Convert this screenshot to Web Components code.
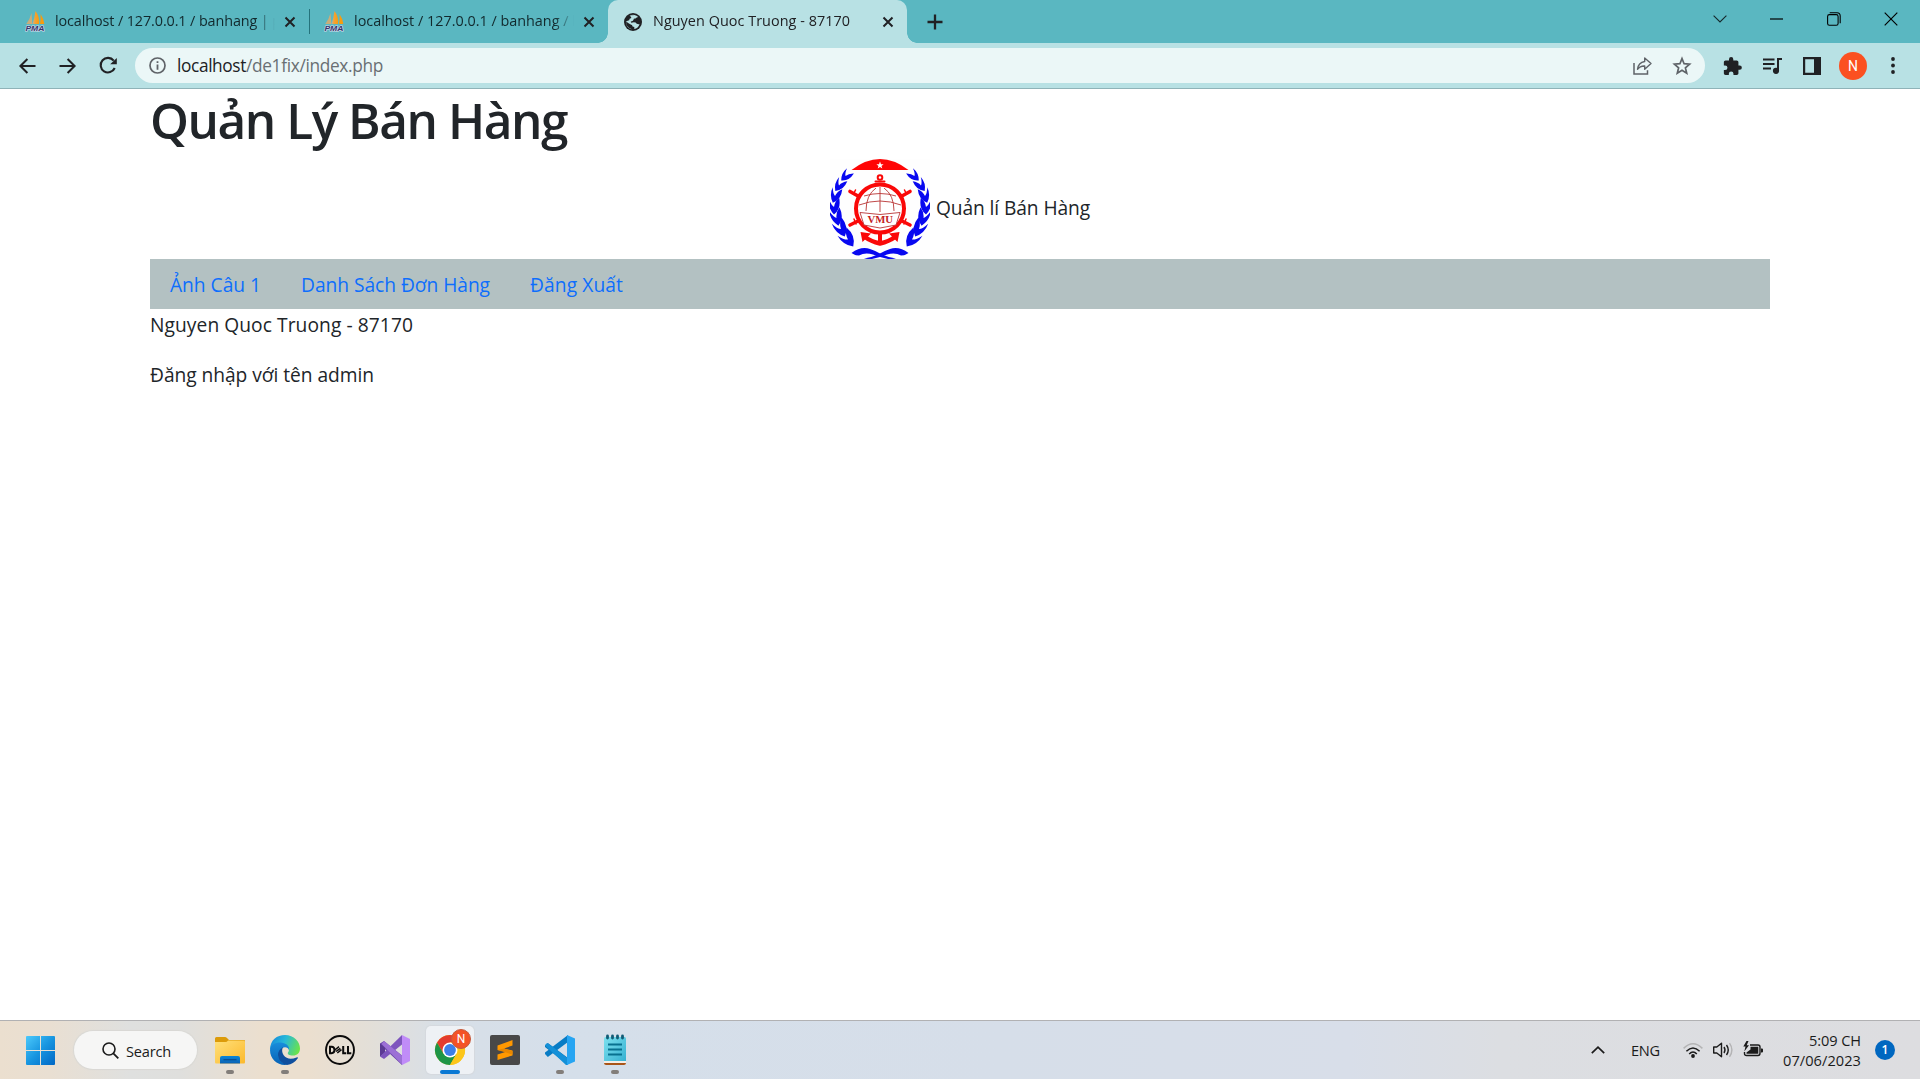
<!DOCTYPE html>
<html lang="vi">
<head>
<meta charset="utf-8">
<title>Nguyen Quoc Truong - 87170</title>
<style>
html,body{margin:0;height:100%;overflow:hidden}
body{font-family:"Open Sans","Noto Sans",sans-serif;background:#fff;color:#212529}
</style>
</head>
<body>
<desk-screen></desk-screen>
<script>
const ICONS = {
  pma: ['0 0 20 21', `<defs><linearGradient id="s" x1="0" x2="1"><stop offset="0" stop-color="#b9b49c"/><stop offset=".4" stop-color="#f5a233"/><stop offset="1" stop-color="#f89c0e"/></linearGradient></defs><path d="M6.500 2 7.300 13H1.300Q5 8 6.500 2Z" fill="#c9ad7a"/><path d="M10.500 0Q15 6 14 13H7.500Q9.600 7 10.500 0Z" fill="url(#s)"/><path d="M15.500 3Q19 8 19.300 13H15Q16 8 15.500 3Z" fill="#f89c0e"/><text x="0.400" y="19.700" font-family="Liberation Sans" font-size="7.300" font-weight="700" font-style="italic" fill="#34356b" stroke="#d6dcec" stroke-width="1.100" paint-order="stroke" textLength="19" lengthAdjust="spacingAndGlyphs">PMA</text>`],
  x: ['0 0 12 12', `<path d="M1.500 1.500 10.500 10.500M10.500 1.500 1.500 10.500" stroke="#202124" stroke-width="2" fill="none"/>`],
  globe: ['0 0 18 18', `<circle cx="9" cy="9" r="9" fill="#202124"/><path d="M10.300 1.900Q13 2.300 14.200 4 12.500 4.300 11.500 5.500 9.500 5.200 9.500 6.800 9 8.500 7.500 8.200 6 8.600 7.300 9.700 9.800 9 11.600 9.600 12.300 11.300 14.700 11.300 L15.600 11.300Q14.200 15.300 10.300 16V14Q8 13.800 8 12 6.500 11.500 2.200 8.400 1.800 10.500 3 12.800 5.300 16 8 16.200 3.500 15.600 2 11 1 5.500 5.500 2.700 8 1.500 10.300 1.900Z" fill="#b8e1e4"/><path d="M10.300 1.900Q8 1.500 5.500 2.700 7.500 3.500 7.300 5 5 5.500 5.200 7.200 3.500 7.400 2.200 8.400L1.700 7Q2 3.500 5.500 2.200Z" fill="#202124"/>`],
  plus: ['0 0 16 16', `<path d="M8 .5V15.500M.5 8H15.500" stroke="#202124" stroke-width="2.300"/>`],
  tabs: ['0 0 14 8', `<path d="M.6.6 7 7 13.400.6" fill="none" stroke="#15282b" stroke-width="1.100"/>`],
  min: ['0 0 13 2', `<path d="M0 1H13" stroke="#000" stroke-width="1.200"/>`],
  restore: ['0 0 14 14', `<rect x=".6" y="2.600" width="10.500" height="10.700" rx="1.800" fill="none" stroke="#000" stroke-width="1.100"/><path d="M2.700.7H10Q13.200.7 13.200 4V11.200" fill="none" stroke="#000" stroke-width="1.100"/>`],
  close: ['0 0 14 14', `<path d="M.7.7 13.300 13.300M13.300.7.7 13.300" stroke="#000" stroke-width="1.150"/>`],
  back: ['0 0 17 16', `<path d="M16.500 8H1.800M8.400 1 1.400 8 8.400 15" fill="none" stroke="#202124" stroke-width="2"/>`],
  forward: ['0 0 17 16', `<path d="M.5 8H15.200M8.600 1 15.600 8 8.600 15" fill="none" stroke="#202124" stroke-width="2"/>`],
  reload: ['0 0 18 17', `<path d="M14.700 3.600A7.300 7.300 0 1 0 15.700 11" fill="none" stroke="#202124" stroke-width="2.100"/><path d="M17.800 1V7.300H11.200Z" fill="#202124"/>`],
  info: ['0 0 17 17', `<circle cx="8.500" cy="8.500" r="7.500" fill="none" stroke="#5f6368" stroke-width="1.700"/><path d="M8.500 7.500V12.700M8.500 4.200V6" stroke="#5f6368" stroke-width="1.800"/>`],
  share: ['0 0 19 18', `<path d="M1 6V17H14.500V13.300" fill="none" stroke="#5f6368" stroke-width="1.500"/><path d="M11.700 1 18 6.600 11.700 12.200V9Q7.200 8.700 4.500 12.300 5.300 5.500 11.700 4.500Z" fill="none" stroke="#5f6368" stroke-width="1.400" stroke-linejoin="round"/>`],
  star: ['0 0 18 18', `<path d="M9 1.600 11.100 6.700 16.600 7.200 12.400 10.800 13.700 16.200 9 13.300 4.300 16.200 5.600 10.800 1.400 7.200 6.900 6.700Z" fill="none" stroke="#5f6368" stroke-width="1.700"/>`],
  puzzle: ['1 1 21 21', `<path fill="#202124" d="M20.500 11H19V7c0-1.100-.9-2-2-2h-4V3.500a2.500 2.500 0 0 0-5 0V5H4c-1.100 0-2 .9-2 2v3.800h1.500a2.700 2.700 0 0 1 0 5.400H2V20c0 1.100.9 2 2 2h3.800v-1.500a2.700 2.700 0 0 1 5.400 0V22H17c1.100 0 2-.9 2-2v-4h1.500a2.500 2.500 0 0 0 0-5z"/>`],
  music: ['0 0 19 16', `<path d="M0 1.500H11.500M0 6H11.500M0 10.500H8" stroke="#202124" stroke-width="1.900"/><path d="M15 12.500V1H19" fill="none" stroke="#202124" stroke-width="2"/><circle cx="13" cy="12.800" r="3.100" fill="#202124"/>`],
  panel: ['0 0 18 18', `<path d="M1.100 1.100H16.900V16.900H1.100Z" fill="none" stroke="#202124" stroke-width="2.200"/><rect x="11" y="1" width="6.500" height="16" fill="#202124"/>`],
  dots: ['0 0 4 17', `<g fill="#202124"><circle cx="2" cy="2" r="1.900"/><circle cx="2" cy="8.500" r="1.900"/><circle cx="2" cy="15" r="1.900"/></g>`],
  windows: ['0 0 29 29', `<defs><linearGradient id="w" gradientUnits="userSpaceOnUse" x1="0" y1="0" x2="29" y2="29"><stop offset="0" stop-color="#4cc9fb"/><stop offset=".5" stop-color="#1795e0"/><stop offset="1" stop-color="#0067c5"/></linearGradient></defs><path fill="url(#w)" d="M1 0H14V14H0V1Q0 0 1 0ZM15 0H28Q29 0 29 1V14H15ZM0 15H14V29H1Q0 29 0 28ZM15 15H29V28Q29 29 28 29H15Z"/>`],
  search: ['0 0 17 17', `<circle cx="7" cy="7" r="6" fill="none" stroke="#1b1b1b" stroke-width="1.600"/><path d="M11.300 11.300 16.300 16.300" stroke="#1b1b1b" stroke-width="1.800"/>`],
  folder: ['0 0 30 30', `<defs><linearGradient id="f" x2="1" y2="1"><stop stop-color="#ffe07a"/><stop offset="1" stop-color="#fcb92c"/></linearGradient><linearGradient id="b" x2="0" y2="1"><stop stop-color="#0a86d8"/><stop offset="1" stop-color="#0b62b4"/></linearGradient></defs><path d="M0 8V3.500Q0 2 1.500 2H10Q11 2 12 3L14 5H29Q30 5 30 6V9H0Z" fill="#dc9b0a"/><path d="M0 7H10.500Q12 7 13 5.500H29Q30 5.500 30 7V27Q30 28.500 29 28.500H1Q0 28.500 0 27Z" fill="url(#f)"/><path d="M5 28.500V23Q5 21 7 21H23Q25 21 25 23V28.500Z" fill="url(#b)"/><path d="M8.500 24.700H21.500" stroke="#0a4f93" stroke-width="1.300"/>`],
  edge: ['0 0 30 30', `<defs><linearGradient id="t" x1="0" y1=".3" x2="1" y2=".6"><stop stop-color="#168bdc"/><stop offset=".45" stop-color="#28b9d8"/><stop offset="1" stop-color="#6be34a"/></linearGradient><linearGradient id="l" x2="0" y2="1"><stop stop-color="#198ddb"/><stop offset="1" stop-color="#0762b6"/></linearGradient></defs><path d="M0 15C0 5 7 0 15 0 24 0 30 6.500 30 13.500 30 18 27 20.500 23 20.500 19 20.500 16.500 19 18.500 16.700 20 14 17.500 10 12 10 6 10 0 14 0 15Z" fill="url(#t)"/><path d="M0 15C.6 9.700 5 7.500 10 7.500 16 7.500 19.800 11.300 19 15 18 11.500 12 11 10 16 8 21 10 27 17 29.800 8 31 0 24.500 0 15Z" fill="url(#l)"/><path d="M13 12Q8 15 8 20 9 28 17 29.900 24 29 28 23 28 22 26.500 22.500 18 26 13.500 20 11 16 13 12Z" fill="#0f4f9e"/>`],
  dell: ['0 0 30 30', `<circle cx="15" cy="15" r="14" fill="none" stroke="#0b0b0b" stroke-width="1.900"/><g fill="none" stroke="#0b0b0b" stroke-width="2"><path d="M5 11.800V18.200H6.500Q9.500 18 9.500 15T6.500 11.800Z"/><path d="M9.800 15 14 11.700M11 16.500 15.300 13.300M12.300 18 16.500 14.700" stroke-width="1.500"/><path d="M18.200 11V18.200H21.300M23 11V18.200H26.300"/></g>`],
  vs: ['0 0 30 30', `<path d="M0 8.500 4 6 22 20.500V30L2 11.500V20L0 21.500Z" fill="#6b46a8"/><path d="M0 21.500V8.500L5 12.500V18Z" fill="#5b3a94"/><path d="M4 24 0 21.500 22 0V9.500Z" fill="#7d55bd"/><path d="M4 6 22.500 21V30L1.500 9Z" fill="#9c70d6"/><path d="M22 0 30 4V26L22 30Z" fill="#c08cf8"/>`],
  chrome: ['0 0 30 30', `<circle cx="15" cy="15" r="15" fill="#fbc116"/><path d="M2 7.500A15 15 0 0 1 28 7.500H15L8.500 18.800Z" fill="#e33b2e"/><path d="M2 7.500A15 15 0 0 0 15 30L21.500 18.800H8.500Z" fill="#1e9547"/><path d="M15 7.500H28A15 15 0 0 1 15 30L21.500 18.800Z" fill="#fcc61a"/><circle cx="15" cy="15" r="7.500" fill="#fff"/><circle cx="15" cy="15" r="5.900" fill="#3d7fe8"/>`],
  sublime: ['0 0 30 30', `<rect width="30" height="30" rx="2" fill="#484848"/><path d="M7.500 10.500 22.500 5V10.500L14 13.500 22.500 15.500V20.500L7.500 25V19.500L16 16.800 7.500 15Z" fill="#ff9800"/><path d="M7.500 15 22.500 19.500V16L14 13.500Z" fill="#e88700"/>`],
  vscode: ['0 0 30 30', `<path d="M0 10.500 2.800 8 23 23V30L0 12Z" fill="#0877b9"/><path d="M0 19 2.800 22 23 7V0L0 17.500Z" fill="#087cc5"/><path d="M0 10.500Q1.500 7 4 9L23 23.500V30H21Z" fill="#1490d8"/><path d="M22 0 30 3.500V26.500L22 30Z" fill="#27a5f2"/>`],
  notepad: ['0 0 22 30', `<defs><linearGradient id="n" x2="1" y2="1"><stop stop-color="#7de1ef"/><stop offset="1" stop-color="#34afd0"/></linearGradient></defs><rect y="2" width="22" height="26" rx="1.500" fill="url(#n)"/><path d="M0 26H22V28Q22 30 20 30H2Q0 30 0 28Z" fill="#f2eee8"/><path d="M0 28H22Q22 30 20 30H2Q0 30 0 28Z" fill="#a85518"/><path d="M4 9.500H18M4 14.500H18M4 19.500H18" stroke="#08718f" stroke-width="1.900"/><path d="M3.500 1V3M8.500 1V3M13.500 1V3M18.500 1V3" stroke="#115b75" stroke-width="2.800" stroke-linecap="round"/>`],
  up: ['0 0 14 8', `<path d="M.8 7.200 7 1.200 13.200 7.200" fill="none" stroke="#1b1b1b" stroke-width="1.700"/>`],
  wifi: ['0 0 20 15', `<g fill="none" stroke="#1b1b1b" stroke-width="1.500"><path d="M.6 5.400Q10-4 19.400 5.400" stroke="#b4b4b5"/><path d="M3.400 8.300Q10 1.600 16.600 8.300"/><path d="M6.200 11Q10 7 13.800 11"/></g><circle cx="10" cy="13" r="1.900" fill="#1b1b1b"/>`],
  volume: ['0 0 20 16', `<g fill="none" stroke="#1b1b1b" stroke-width="1.400"><path d="M.7 5H3.800L8.500 1.300V14.700L3.800 11H.7Z" stroke-linejoin="round"/><path d="M11 5Q13 8 11 11M13.500 3Q17 8 13.500 13"/><path d="M16.500 1.200Q21.300 8 16.500 14.800" stroke="#b4b4b5"/></g>`],
  battery: ['0 0 20 16', `<path d="M7 4H15Q17 4 17 6V12Q17 14.500 15 14.500H3.500Q1.500 14.500 1.500 12.500V11" fill="none" stroke="#1b1b1b" stroke-width="1.400"/><path d="M7.500 5.800H15.300V12.800H3.500V11.500L7.500 8.500ZM18 7.500H19Q20 7.500 20 8.500V10.500Q20 11.500 19 11.500H18Z" fill="#1b1b1b"/><path d="M3.500 0 .3 5.600H2.500L1.300 10.500 6 4.300H3.700L5.500 0Z" fill="#1b1b1b"/>`]
};

const shadow = (el, html) => { el.attachShadow({mode:'open'}).innerHTML = html; return el.shadowRoot; };

class UiIcon extends HTMLElement {
  connectedCallback() {
    const [box, body] = ICONS[this.getAttribute('name')];
    const [, , bw, bh] = box.split(' ');
    const w = this.getAttribute('w') || bw, h = this.getAttribute('h') || bh;
    shadow(this, `<style>:host{display:inline-flex;flex:none}svg{display:block;overflow:visible}</style><svg width="${w}" height="${h}" viewBox="${box}">${body}</svg>`);
  }
}
customElements.define('ui-icon', UiIcon);

/* Text run whose letter spacing is adjusted so that it takes up a set width. */
class FitText extends HTMLElement {
  connectedCallback() {
    const root = shadow(this, `<style>:host{display:inline-block;white-space:pre;flex:none}span{display:inline-block}</style><span><slot></slot></span>`);
    const w = +this.getAttribute('w'), s = root.querySelector('span');
    const n = [...this.textContent].length;
    s.style.letterSpacing = (w - s.getBoundingClientRect().width) / n + 'px';
    this.style.width = w + 'px';
  }
}
customElements.define('fit-text', FitText);

class BrowserTab extends HTMLElement {
  constructor() {
    super();
    shadow(this, `<style>
      :host{display:flex;align-items:center;width:299px;height:43px;box-sizing:border-box;padding-left:15px;color:#12292d;font-size:14.400px;position:relative;flex:none}
      .title{width:220px;margin-left:10px;margin-top:-2px;overflow:hidden;white-space:nowrap;line-height:24px;flex:none;-webkit-mask-image:linear-gradient(90deg,#000 200px,transparent 220px)}
      ui-icon{margin-top:-1px}
      .x{margin-left:9px;margin-top:0}
      :host([active]){background:#b8e1e4;border-radius:10px 10px 0 0;color:#202124}
      :host([active])::before,:host([active])::after{content:"";position:absolute;bottom:0;width:10px;height:10px}
      :host([active])::before{left:-10px;background:radial-gradient(circle at 0 0,transparent 9.500px,#b8e1e4 10px)}
      :host([active])::after{right:-10px;background:radial-gradient(circle at 100% 0,transparent 9.500px,#b8e1e4 10px)}
    </style><slot name="icon"></slot><div class="title"><slot></slot></div><ui-icon class="x" name="x"></ui-icon>`);
  }
}
customElements.define('browser-tab', BrowserTab);

class TabStrip extends HTMLElement {
  constructor() {
    super();
    shadow(this, `<style>
      :host{display:flex;height:43px;background:#5ab7c1;padding-left:10px;align-items:center}
      .sep{width:1px;height:25px;background:#25737c;flex:none}
      .new{margin-left:20px}
      .win{margin-left:auto;display:flex;height:37px;align-self:flex-start;align-items:center}
      .win span{width:57px;display:flex;justify-content:center}
      .win span:last-child{width:58px}
    </style>
    <browser-tab><ui-icon slot="icon" name="pma"></ui-icon><fit-text w="226">localhost / 127.0.0.1 / banhang | p</fit-text></browser-tab>
    <div class="sep"></div>
    <browser-tab style="width:298px;padding-left:14px"><ui-icon slot="icon" name="pma"></ui-icon><fit-text w="227">localhost / 127.0.0.1 / banhang / h</fit-text></browser-tab>
    <browser-tab active><ui-icon slot="icon" name="globe" style="margin:0 1px 0 1px"></ui-icon><fit-text w="197">Nguyen Quoc Truong - 87170</fit-text></browser-tab>
    <ui-icon class="new" name="plus"></ui-icon>
    <div class="win"><span><ui-icon name="tabs"></ui-icon></span><span><ui-icon name="min"></ui-icon></span><span><ui-icon name="restore"></ui-icon></span><span><ui-icon name="close"></ui-icon></span></div>`);
  }
}
customElements.define('tab-strip', TabStrip);

class AddressBar extends HTMLElement {
  constructor() {
    super();
    shadow(this, `<style>
      :host{display:flex;height:45px;background:#b8e1e4;align-items:center;box-sizing:border-box;padding:0 26px 0 19px}
      .bar{display:flex;align-items:center;height:35px;width:1570px;border-radius:18px;background:#ebf7f7;margin-left:18px;box-sizing:border-box;padding:0 14px;flex:none;font-size:17.300px}
      .url{display:flex;margin-left:11px;color:#202124}
      .path{color:#696f73}
      .share{margin-left:auto;margin-right:21px}
      .avatar{width:28px;height:28px;border-radius:50%;background:#fb5020;color:#fff;font:14px/28px Roboto,sans-serif;text-align:center;margin:0 24px 0 18px;flex:none}
    </style>
    <ui-icon name="back"></ui-icon><ui-icon name="forward" style="margin-left:23px"></ui-icon><ui-icon name="reload" style="margin-left:23px"></ui-icon>
    <div class="bar"><ui-icon name="info"></ui-icon><div class="url"><fit-text w="69">localhost</fit-text><fit-text class="path" w="137">/de1fix/index.php</fit-text></div><ui-icon class="share" name="share"></ui-icon><ui-icon name="star"></ui-icon></div>
    <ui-icon name="puzzle" w="18" h="18" style="margin-left:18px"></ui-icon><ui-icon name="music" style="margin-left:22px"></ui-icon><ui-icon name="panel" style="margin-left:21px"></ui-icon>
    <div class="avatar">N</div><ui-icon name="dots"></ui-icon>`);
  }
}
customElements.define('address-bar', AddressBar);

class SchoolEmblem extends HTMLElement {
  constructor() {
    super();
    const spots = [[15.500,17,44],[9,26.500,34],[5,37,18],[4,48,0],[6.500,59,-14],[11,70,-27],[18,80.500,-37]];
    const leaves = spots.map(([x,y,r],i)=>`<path transform="translate(${x} ${y}) rotate(${r}) scale(${.95+i*.065})" d="M0 6.500Q-5.500 1-4.500-7-2.500-1.500 0 0 .5-4.500 4.500-8 6.500 1.500 0 6.500Z"/>`).join('');
    shadow(this, `<style>:host{display:inline-block;width:100px;height:100px;flex:none}svg{display:block}</style>
    <svg width="100" height="100" viewBox="0 0 100 100">
      <rect width="100" height="100" fill="#fefefe"/>
      <path d="M21.500 11Q50-11 78.500 11Z" fill="#ff0505"/>
      <path d="M50 2.500 51 5.200H53.600L51.500 6.900 52.300 9.500 50 8 47.700 9.500 48.500 6.900 46.400 5.200H49Z" fill="#fff"/>
      <g fill="#0808f0">${leaves}<g transform="matrix(-1 0 0 1 100 0)">${leaves}</g></g>
      <g fill="#0808f0"><path id="r" d="M21.500 94Q31 87 40 90 46 92 50 94.500 58 98.500 66 99.500L62 100H58Q49 98 43 95.500 35 93 29 96.500 25 96.500 21.500 94Z"/><path transform="matrix(-1 0 0 1 100 0)" d="M21.500 94Q31 87 40 90 46 92 50 94.500 58 98.500 66 99.500L62 100H58Q49 98 43 95.500 35 93 29 96.500 25 96.500 21.500 94Z"/></g>
      <g stroke="#fa0808" stroke-width="3.600" stroke-linecap="round" fill="none">
        <path d="M20 32.500 28 37M80 32.500 72 37M20 66 28 62M80 66 72 62"/><path d="M25.500 31 23.500 35M74.500 31 76.500 35M24 60 26 65M76 60 74 65" stroke-width="1.500"/>
        <circle cx="50" cy="18.500" r="2.300" stroke-width="2"/><path d="M45.500 22.500H54.500" stroke-width="2"/>
        <path d="M50 75V86" stroke-width="4" stroke-linecap="butt"/><path d="M35 78Q41 82.500 50 84.500 59 82.500 65 78" stroke-width="4.500" stroke-linecap="butt"/></g>
      <path d="M30.500 73 41 74.500 32.500 83ZM69.500 73 59 74.500 67.500 83Z" fill="#fa0808"/>
      <circle cx="50" cy="49.500" r="24" fill="#fff" stroke="#fa0808" stroke-width="4"/>
      <g fill="none" stroke="#b93434" stroke-width=".9"><path d="M50 28V53M34 37Q50 32 66 37M29 46Q50 38 71 46M46 29Q36 36 36 52M54 29Q64 36 64 52"/><path d="M30 53.500 50 55.500 70 53.500 66 66 50 69 34 66Z" fill="#fff"/></g>
      <text x="37.500" y="64.300" font-family="Liberation Serif" font-weight="700" font-size="10" fill="#c31e1e" textLength="25.500" lengthAdjust="spacingAndGlyphs">VMU</text>
    </svg>`);
  }
}
customElements.define('school-emblem', SchoolEmblem);

class NavMenu extends HTMLElement {
  constructor() {
    super();
    shadow(this, `<style>:host{display:flex;height:50px;background:#b3c1c2;align-items:center;padding-left:20px;gap:40px;line-height:30px}
    a{color:#0d6efd;text-decoration:none;display:flex;padding-top:2px}</style>
    <a><fit-text w="91">Ảnh Câu 1</fit-text></a><a><fit-text w="189">Danh Sách Đơn Hàng</fit-text></a><a><fit-text w="93">Đăng Xuất</fit-text></a>`);
  }
}
customElements.define('nav-menu', NavMenu);

class ShopPage extends HTMLElement {
  constructor() {
    super();
    shadow(this, `<style>
      :host{display:block;flex:1;border-top:1px solid #8fb3b8;background:#fff;padding:0 150px;font-size:19.200px;line-height:30px;color:#212529}
      h1{margin:0 0 10px;padding-top:1px;box-sizing:border-box;font-size:49.500px;line-height:60px;font-weight:600;height:60px;display:flex}
      .brand{display:flex;height:100px;align-items:center;justify-content:center;gap:6px}
      .brand fit-text{margin-top:-3px}
      .line{height:30px;display:flex;padding-top:1px;box-sizing:border-box}
      .line+.line{margin-top:20px}
    </style>
    <h1><fit-text w="417">Quản Lý Bán Hàng</fit-text></h1>
    <div class="brand"><school-emblem></school-emblem><fit-text w="154">Quản lí Bán Hàng</fit-text></div>
    <nav-menu></nav-menu>
    <div class="line"><fit-text w="263">Nguyen Quoc Truong - 87170</fit-text></div>
    <div class="line"><fit-text w="224">Đăng nhập với tên admin</fit-text></div>`);
  }
}
customElements.define('shop-page', ShopPage);

class TaskApp extends HTMLElement {
  constructor() {
    super();
    shadow(this, `<style>
      :host{display:flex;width:48px;height:48px;border-radius:5px;align-items:center;justify-content:center;position:relative;flex:none}
      :host([focused]){background:#eef1f5;box-shadow:0 0 1px 1px #d5d9de}
      :host([running])::after{content:"";position:absolute;left:20px;bottom:0;width:8px;height:4px;border-radius:2px;background:#827e7a}
      :host([focused])::after{content:"";position:absolute;left:14px;bottom:0;width:20px;height:4px;border-radius:2px;background:#0878d4}
    </style><slot></slot><slot name="badge"></slot>`);
  }
}
customElements.define('task-app', TaskApp);

class TaskBar extends HTMLElement {
  constructor() {
    super();
    shadow(this, `<style>
      :host{display:flex;height:59px;box-sizing:border-box;border-top:1px solid #b1b1b3;align-items:center;padding:0 25px 0 26px;color:#1b1b1b;font-size:14.600px;
        background:linear-gradient(90deg,#ebdfcf 0,#e9dfd2 50px,#dfe0df 130px,#dfdfdd 180px,#ebdfcf 260px,#ebdfcf 310px,#e3dfd8 370px,#d8dfe7 440px,#d5dfea 560px,#d6dee9 1000px,#d8dee9 1350px,#dcdee2 1500px,#dddde0 1920px)}
      .search{display:flex;align-items:center;width:123px;height:38px;border-radius:19px;background:#f6f6f5;box-shadow:0 0 1px 1px #d9d8d4;box-sizing:border-box;padding-left:28px;margin:0 9px 0 19px;gap:7px;line-height:20px}
      .search fit-text{margin-top:1px}
      .apps{display:flex;gap:7px}
      .n{position:absolute;left:25px;top:3px;width:18px;height:18px;border-radius:50%;background:#f45225;border:1px solid #c55a3c;color:#fff;font:12px/18px Roboto,sans-serif;text-align:center}
      .tray{margin-left:auto;display:flex;align-items:center}
      .clock{display:flex;flex-direction:column;align-items:flex-end;line-height:20px;margin-left:20px}
      .badge{width:20px;height:20px;border-radius:50%;background:#0067c0;color:#fff;font-size:12px;line-height:20px;font-weight:600;text-align:center;margin-left:14px}
    </style>
    <ui-icon name="windows"></ui-icon>
    <div class="search"><ui-icon name="search"></ui-icon><fit-text w="45">Search</fit-text></div>
    <div class="apps">
      <task-app running><ui-icon name="folder"></ui-icon></task-app>
      <task-app running><ui-icon name="edge"></ui-icon></task-app>
      <task-app><ui-icon name="dell"></ui-icon></task-app>
      <task-app><ui-icon name="vs"></ui-icon></task-app>
      <task-app focused><ui-icon name="chrome"></ui-icon><div slot="badge" class="n">N</div></task-app>
      <task-app><ui-icon name="sublime"></ui-icon></task-app>
      <task-app running><ui-icon name="vscode"></ui-icon></task-app>
      <task-app running><ui-icon name="notepad"></ui-icon></task-app>
    </div>
    <div class="tray">
      <ui-icon name="up"></ui-icon><fit-text w="29" style="margin-left:26px">ENG</fit-text>
      <ui-icon name="wifi" style="margin-left:23px"></ui-icon><ui-icon name="volume" style="margin-left:10px"></ui-icon><ui-icon name="battery" style="margin:-2px 0 0 10px"></ui-icon>
      <div class="clock"><fit-text w="52">5:09 CH</fit-text><fit-text w="78">07/06/2023</fit-text></div>
      <div class="badge">1</div>
    </div>`);
  }
}
customElements.define('task-bar', TaskBar);

class DeskScreen extends HTMLElement {
  constructor() {
    super();
    shadow(this, `<style>:host{display:flex;flex-direction:column;width:1920px;height:1079px;overflow:hidden}tab-strip,address-bar,task-bar{flex:none}</style>
    <tab-strip></tab-strip><address-bar></address-bar><shop-page></shop-page><task-bar></task-bar>`);
  }
}
customElements.define('desk-screen', DeskScreen);
</script>
</body>
</html>
